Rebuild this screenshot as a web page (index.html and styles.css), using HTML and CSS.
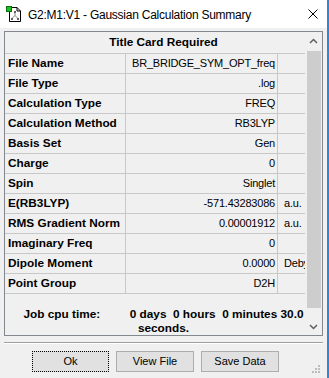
FILE: index.html
```html
<!DOCTYPE html>
<html>
<head>
<meta charset="utf-8">
<link rel="stylesheet" href="styles.css">
</head>
<body>
<div class="window">
  <div class="titlebar">
    <svg class="app-icon" width="16" height="16" viewBox="0 0 16 16">
      <path d="M3.5 1.5 H11 L14.5 5 V15.5 H3.5 Z" fill="#fff" stroke="#000" stroke-width="1"/>
      <path d="M11 1.5 V5 H14.5" fill="none" stroke="#000" stroke-width="1"/>
      <path d="M9 6 V9.5 M9 9.5 L6 12.5 M9 9.5 L12 12.5" stroke="#808080" stroke-width="1" fill="none"/>
      <rect x="8" y="5" width="2" height="2" fill="#606060"/>
      <rect x="5" y="12" width="2" height="2" fill="#606060"/>
      <rect x="11" y="12" width="2" height="2" fill="#606060"/>
      <rect x="0.5" y="0.5" width="5" height="5" fill="#19c11d" stroke="#0a6d0c" stroke-width="1"/>
    </svg>
    <span class="title">G2:M1:V1 - Gaussian Calculation Summary</span>
    <svg class="close" width="10" height="10" viewBox="0 0 10 10">
      <path d="M0.5 0.5 L9.5 9.5 M9.5 0.5 L0.5 9.5" stroke="#000" stroke-width="1"/>
    </svg>
  </div>
  <div class="client">
    <div class="panel">
      <div class="grid">
        <div class="head">Title Card Required</div>
        <div class="row"><div class="c-name">File Name</div><div class="c-val">BR_BRIDGE_SYM_OPT_freq</div><div class="c-unit"></div></div>
        <div class="row"><div class="c-name">File Type</div><div class="c-val">.log</div><div class="c-unit"></div></div>
        <div class="row"><div class="c-name">Calculation Type</div><div class="c-val">FREQ</div><div class="c-unit"></div></div>
        <div class="row"><div class="c-name">Calculation Method</div><div class="c-val">RB3LYP</div><div class="c-unit"></div></div>
        <div class="row"><div class="c-name">Basis Set</div><div class="c-val">Gen</div><div class="c-unit"></div></div>
        <div class="row"><div class="c-name">Charge</div><div class="c-val">0</div><div class="c-unit"></div></div>
        <div class="row"><div class="c-name">Spin</div><div class="c-val">Singlet</div><div class="c-unit"></div></div>
        <div class="row"><div class="c-name">E(RB3LYP)</div><div class="c-val">-571.43283086</div><div class="c-unit">a.u.</div></div>
        <div class="row"><div class="c-name">RMS Gradient Norm</div><div class="c-val">0.00001912</div><div class="c-unit">a.u.</div></div>
        <div class="row"><div class="c-name">Imaginary Freq</div><div class="c-val">0</div><div class="c-unit"></div></div>
        <div class="row"><div class="c-name">Dipole Moment</div><div class="c-val">0.0000</div><div class="c-unit">Debye</div></div>
        <div class="row"><div class="c-name">Point Group</div><div class="c-val">D2H</div><div class="c-unit"></div></div>
        <div class="foot">Job cpu time:         0 days  0 hours  0 minutes 30.0<br>seconds.</div>
      </div>
      <div class="scrollbar">
        <div class="sb-btn">
          <svg width="9" height="6" viewBox="0 0 9 6"><path d="M1 5 L4.5 1.5 L8 5" fill="none" stroke="#606060" stroke-width="1.5"/></svg>
        </div>
        <div class="sb-track"><div class="sb-thumb"></div></div>
        <div class="sb-btn">
          <svg width="9" height="6" viewBox="0 0 9 6"><path d="M1 1 L4.5 4.5 L8 1" fill="none" stroke="#606060" stroke-width="1.5"/></svg>
        </div>
      </div>
    </div>
    <div class="sep"></div>
    <div class="buttons">
      <button class="btn btn-default">Ok</button>
      <button class="btn">View File</button>
      <button class="btn">Save Data</button>
    </div>
  </div>
  <svg class="grip" width="10" height="10" viewBox="0 0 10 10">
    <rect x="7" y="1" width="2" height="2" fill="#bdbdbd"/>
    <rect x="4" y="4" width="2" height="2" fill="#bdbdbd"/>
    <rect x="7" y="4" width="2" height="2" fill="#bdbdbd"/>
    <rect x="1" y="7" width="2" height="2" fill="#bdbdbd"/>
    <rect x="4" y="7" width="2" height="2" fill="#bdbdbd"/>
    <rect x="7" y="7" width="2" height="2" fill="#bdbdbd"/>
  </svg>
</div>
</body>
</html>
```

FILE: styles.css
```css
html, body {
  margin: 0;
  padding: 0;
  background: #f0f0f0;
}
body {
  font-family: "Liberation Sans", Arial, sans-serif;
  color: #000;
}
.window {
  position: relative;
  width: 329px;
  height: 378px;
  box-sizing: border-box;
  border-right: 2px solid #2b88d8;
  background: #f0f0f0;
  overflow: hidden;
}
.titlebar {
  height: 28px;
  background: #fff;
  display: flex;
  align-items: center;
}
.app-icon {
  margin-left: 6px;
  margin-top: -1px;
  flex: none;
}
.title {
  margin-left: 6px;
  font-size: 12px;
  letter-spacing: -0.25px;
  flex: 1;
  white-space: nowrap;
  padding-top: 1px;
}
.close {
  margin-right: 9px;
  flex: none;
}
.client {
  padding: 3px 0 0 4px;
}
.panel {
  width: 319px;
  height: 305px;
  box-sizing: border-box;
  border: 1px solid #828790;
  display: flex;
}
.grid {
  width: 300px;
  flex: none;
  overflow: hidden;
}
.head {
  height: 22px;
  box-sizing: border-box;
  border-bottom: 1px solid #c8c8c8;
  line-height: 21px;
  font-weight: bold;
  font-size: 11.8px;
  text-align: center;
  padding-left: 17px;
  white-space: nowrap;
}
.row {
  display: flex;
  height: 20px;
  box-sizing: border-box;
  border-bottom: 1px solid #c8c8c8;
  line-height: 19px;
  white-space: nowrap;
}
.c-name {
  width: 121px;
  flex: none;
  box-sizing: border-box;
  border-right: 1px solid #c8c8c8;
  padding-left: 3px;
  font-weight: bold;
  font-size: 11.8px;
  overflow: hidden;
}
.c-val {
  width: 152px;
  flex: none;
  box-sizing: border-box;
  border-right: 1px solid #c8c8c8;
  padding-right: 2px;
  text-align: right;
  font-size: 11px;
  letter-spacing: -0.2px;
  overflow: hidden;
}
.c-unit {
  flex: 1;
  min-width: 0;
  padding-left: 6px;
  font-size: 11px;
  letter-spacing: -0.2px;
  overflow: hidden;
}
.foot {
  padding-top: 13px;
  padding-left: 17px;
  text-align: center;
  font-weight: bold;
  font-size: 11.8px;
  line-height: 14.4px;
  white-space: pre;
}
.scrollbar {
  width: 17px;
  flex: none;
  display: flex;
  flex-direction: column;
  background: #f0f0f0;
}
.sb-btn {
  height: 17px;
  flex: none;
  display: flex;
  align-items: center;
  justify-content: center;
}
.sb-track {
  flex: 1;
  padding: 2px 1px 10px 2px;
  display: flex;
  flex-direction: column;
}
.sb-thumb {
  flex: 1;
  background: #cdcdcd;
}
.sep {
  width: 319px;
  margin-top: 6px;
  border-top: 1px solid #a0a0a0;
  border-bottom: 1px solid #ffffff;
}
.buttons {
  margin-top: 7px;
  margin-left: 28px;
  display: grid;
  grid-template-columns: 77px 78px 78px;
  column-gap: 7px;
}
.btn {
  height: 21px;
  margin: 0;
  padding: 0;
  box-sizing: border-box;
  border: 1px solid #adadad;
  background: #e1e1e1;
  font-family: "Liberation Sans", Arial, sans-serif;
  font-size: 11px;
  color: #000;
  line-height: 19px;
}
.btn-default {
  border: 1px dotted #000;
}
.grip {
  position: absolute;
  left: 311px;
  top: 364px;
}
```
